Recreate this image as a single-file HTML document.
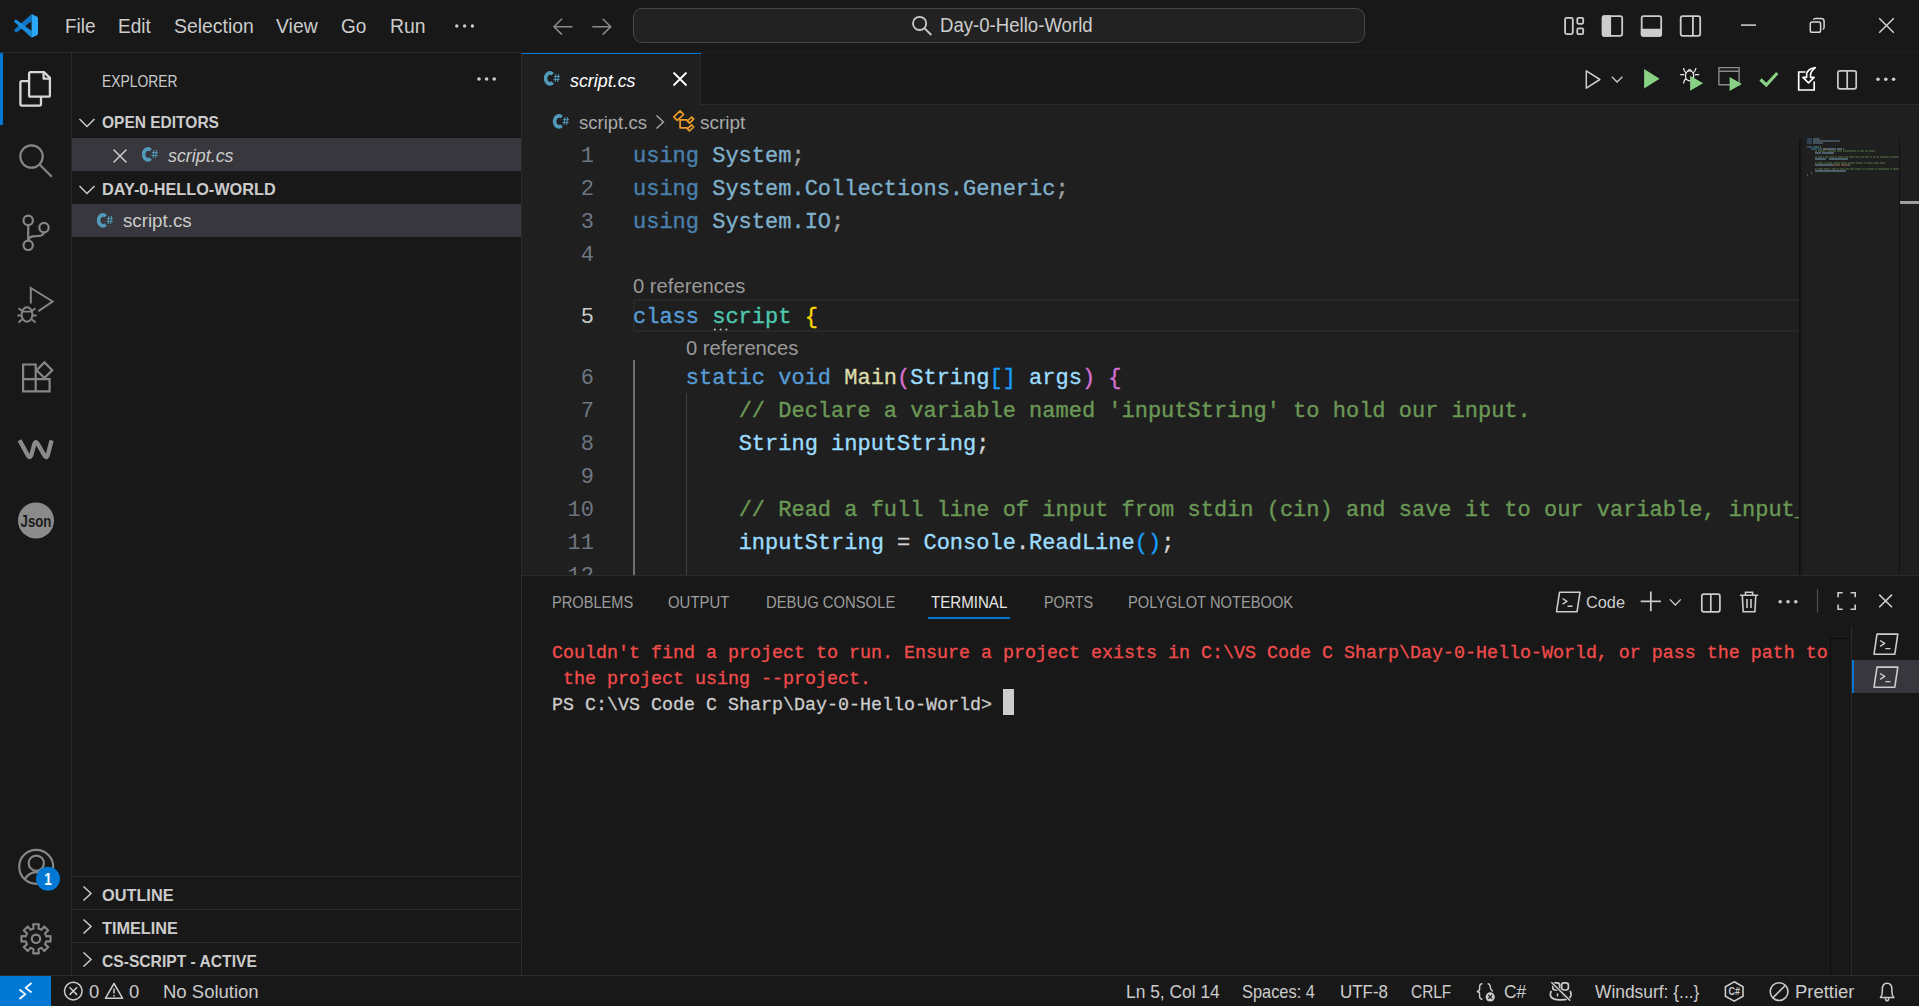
<!DOCTYPE html>
<html><head><meta charset="utf-8">
<style>
*{margin:0;padding:0;box-sizing:border-box}
html,body{width:1919px;height:1006px;overflow:hidden;background:#181818}
body{position:relative;font-family:"Liberation Sans",sans-serif;color:#cccccc}
.a{position:absolute}
.t{position:absolute;white-space:pre;line-height:1;transform-origin:0 0}
.b{font-weight:bold}
.i{font-style:italic}
.code{position:absolute;white-space:pre;-webkit-text-stroke:0.35px;font-family:"Liberation Mono",monospace;font-size:22px;line-height:33px;height:33px;left:633px}
.ln{position:absolute;white-space:pre;font-family:"Liberation Mono",monospace;font-size:22px;line-height:33px;color:#6e7681;text-align:right;width:80px;left:514px}
.kw{color:#569cd6}.ns{color:#9cdcfe}.ty{color:#4ec9b0}.fn{color:#dcdcaa}.cm{color:#6a9955}.pu{color:#d4d4d4}
.ukw{color:#4a80ad}.uns{color:#7fb0cc}.upu{color:#a0a0a0}
.term{position:absolute;white-space:pre;-webkit-text-stroke:0.3px;font-family:"Liberation Mono",monospace;font-size:18.33px;line-height:26px;left:552px}
#ov{position:absolute;left:0;top:0;width:1919px;height:1006px;overflow:visible}
</style></head><body>
<!-- regions -->
<div class="a" style="left:0;top:0;width:1919px;height:53px;background:#181818;border-bottom:1px solid #2b2b2b"></div>
<div class="a" style="left:0;top:53px;width:72px;height:922px;background:#181818;border-right:1px solid #2b2b2b"></div>
<div class="a" style="left:72px;top:53px;width:450px;height:922px;background:#181818;border-right:1px solid #2b2b2b"></div>
<div class="a" style="left:522px;top:52px;width:1397px;height:523px;background:#1f1f1f"></div>
<div class="a" style="left:522px;top:53px;width:1397px;height:52px;background:#181818;border-bottom:1px solid #2b2b2b"></div>
<div class="a" style="left:522px;top:575px;width:1397px;height:400px;background:#181818;border-top:1px solid #2b2b2b"></div>
<div class="a" style="left:0;top:975px;width:1919px;height:31px;background:#181818;border-top:1px solid #2b2b2b"></div>
<!-- activity indicator -->
<div class="a" style="left:0;top:53px;width:3px;height:72px;background:#0078d4"></div>

<!-- TITLE BAR -->
<div class="t" style="left:65px;top:16px;font-size:20px;transform:scaleX(0.95)">File</div>
<div class="t" style="left:118px;top:16px;font-size:20px;transform:scaleX(0.95)">Edit</div>
<div class="t" style="left:174px;top:16px;font-size:20px;transform:scaleX(0.97)">Selection</div>
<div class="t" style="left:276px;top:16px;font-size:20px;transform:scaleX(0.97)">View</div>
<div class="t" style="left:341px;top:16px;font-size:20px;transform:scaleX(0.95)">Go</div>
<div class="t" style="left:390px;top:16px;font-size:20px;transform:scaleX(0.97)">Run</div>
<div class="a" style="left:633px;top:8px;width:732px;height:35px;border-radius:9px;background:#222222;border:1px solid #474747"></div>
<div class="t" style="left:940px;top:15px;font-size:20px;transform:scaleX(0.93)">Day-0-Hello-World</div>

<!-- SIDEBAR -->
<div class="t" style="left:102px;top:72.5px;font-size:16.5px;transform:scaleX(0.84)">EXPLORER</div>
<div class="a" style="left:72px;top:138px;width:449px;height:33px;background:#37373d"></div>
<div class="a" style="left:72px;top:204px;width:449px;height:33px;background:#37373d"></div>
<div class="t b" style="left:102px;top:114px;font-size:16.5px;transform:scaleX(0.94)">OPEN EDITORS</div>
<div class="t i" style="left:168px;top:146px;font-size:19px;transform:scaleX(0.94)">script.cs</div>
<div class="t b" style="left:102px;top:181px;font-size:16.5px;transform:scaleX(0.985)">DAY-0-HELLO-WORLD</div>
<div class="t" style="left:123px;top:210.5px;font-size:19px;transform:scaleX(0.985)">script.cs</div>
<div class="a" style="left:72px;top:876px;width:449px;height:1px;background:#2b2b2b"></div>
<div class="a" style="left:72px;top:909px;width:449px;height:1px;background:#2b2b2b"></div>
<div class="a" style="left:72px;top:942px;width:449px;height:1px;background:#2b2b2b"></div>
<div class="t b" style="left:102px;top:886.5px;font-size:16.5px;transform:scaleX(0.988)">OUTLINE</div>
<div class="t b" style="left:102px;top:919.5px;font-size:16.5px;transform:scaleX(0.986)">TIMELINE</div>
<div class="t b" style="left:102px;top:952.5px;font-size:16.5px;transform:scaleX(0.947)">CS-SCRIPT - ACTIVE</div>

<!-- TAB -->
<div class="a" style="left:522px;top:53px;width:179px;height:52px;background:#1f1f1f;border-right:1px solid #2b2b2b"></div>
<div class="a" style="left:522px;top:52.5px;width:179px;height:1.5px;background:#0078d4"></div>
<div class="t i" style="left:570px;top:71px;font-size:19px;color:#ffffff;transform:scaleX(0.94)">script.cs</div>
<div class="t" style="left:579px;top:113px;font-size:19px;color:#a9a9a9;transform:scaleX(0.975)">script.cs</div>
<div class="t" style="left:700px;top:113px;font-size:19px;color:#a9a9a9">script</div>

<!-- CODE -->
<div class="ln" style="top:140px">1</div>
<div class="ln" style="top:173px">2</div>
<div class="ln" style="top:206px">3</div>
<div class="ln" style="top:239px">4</div>
<div class="ln" style="top:301px;color:#cccccc">5</div>
<div class="ln" style="top:362px">6</div>
<div class="ln" style="top:395px">7</div>
<div class="ln" style="top:428px">8</div>
<div class="ln" style="top:461px">9</div>
<div class="ln" style="top:494px">10</div>
<div class="ln" style="top:527px">11</div>
<div class="ln" style="top:560px;height:15px;overflow:hidden">12</div>
<!-- current line box -->
<div class="a" style="left:633px;top:299px;width:1166px;height:33px;border:2px solid #282828;border-right:none"></div>
<!-- indent guides -->
<div class="a" style="left:633px;top:360px;width:2px;height:215px;background:#707070"></div>
<div class="a" style="left:686px;top:393px;width:1px;height:182px;background:#404040"></div>

<div class="code" style="top:140px"><span class="ukw">using</span> <span class="uns">System</span><span class="upu">;</span></div>
<div class="code" style="top:173px"><span class="ukw">using</span> <span class="uns">System.Collections.Generic</span><span class="upu">;</span></div>
<div class="code" style="top:206px"><span class="ukw">using</span> <span class="uns">System.IO</span><span class="upu">;</span></div>
<div class="t" style="left:633px;top:276px;font-size:20px;color:#999999;transform:scaleX(1.01)">0 references</div>
<div class="code" style="top:301px"><span class="kw">class</span> <span class="ty">script</span> <span style="color:#ffd700">{</span></div>
<div class="t" style="left:686px;top:338px;font-size:20px;color:#999999;transform:scaleX(1.01)">0 references</div>
<div class="code" style="top:362px">    <span class="kw">static</span> <span class="kw">void</span> <span class="fn">Main</span><span style="color:#da70d6">(</span><span class="ns">String</span><span style="color:#179fff">[]</span> <span class="ns">args</span><span style="color:#da70d6">)</span> <span style="color:#da70d6">{</span></div>
<div class="code" style="top:395px">        <span class="cm">// Declare a variable named 'inputString' to hold our input.</span></div>
<div class="code" style="top:428px">        <span class="ns">String</span> <span class="ns">inputString</span><span class="pu">;</span></div>
<div class="code" style="top:494px;width:1166px;overflow:hidden">        <span class="cm">// Read a full line of input from stdin (cin) and save it to our variable, input_</span></div>
<div class="code" style="top:527px">        <span class="ns">inputString</span> <span class="pu">=</span> <span class="ns">Console</span><span class="pu">.</span><span class="ns">ReadLine</span><span style="color:#179fff">()</span><span class="pu">;</span></div>

<!-- PANEL -->
<div class="t" style="left:552px;top:594px;font-size:16.5px;color:#9d9d9d;transform:scaleX(0.885)">PROBLEMS</div>
<div class="t" style="left:668px;top:594px;font-size:16.5px;color:#9d9d9d;transform:scaleX(0.905)">OUTPUT</div>
<div class="t" style="left:766px;top:594px;font-size:16.5px;color:#9d9d9d;transform:scaleX(0.898)">DEBUG CONSOLE</div>
<div class="t" style="left:931px;top:594px;font-size:16.5px;color:#e7e7e7;transform:scaleX(0.915)">TERMINAL</div>
<div class="a" style="left:928px;top:617px;width:82px;height:1.5px;background:#0078d4"></div>
<div class="t" style="left:1044px;top:594px;font-size:16.5px;color:#9d9d9d;transform:scaleX(0.87)">PORTS</div>
<div class="t" style="left:1128px;top:594px;font-size:16.5px;color:#9d9d9d;transform:scaleX(0.89)">POLYGLOT NOTEBOOK</div>
<div class="t" style="left:1586px;top:594px;font-size:17px;color:#cccccc;transform:scaleX(0.96)">Code</div>
<div class="term" style="top:641px;color:#f14c4c">Couldn't find a project to run. Ensure a project exists in C:\VS Code C Sharp\Day-0-Hello-World, or pass the path to</div>
<div class="term" style="top:667px;color:#f14c4c"> the project using --project.</div>
<div class="term" style="top:693px;color:#cccccc">PS C:\VS Code C Sharp\Day-0-Hello-World> </div>
<div class="a" style="left:1003px;top:689px;width:11px;height:26px;background:#cccccc"></div>
<!-- terminal side -->
<div class="a" style="left:1830px;top:638px;width:21px;height:337px;border-left:1px solid #0c0c0c;border-top:1px solid #0c0c0c"></div>
<div class="a" style="left:1851px;top:627px;width:1px;height:348px;background:#2b2b2b"></div>
<div class="a" style="left:1852px;top:660px;width:67px;height:33px;background:#37373d"></div>
<div class="a" style="left:1852px;top:660px;width:2px;height:33px;background:#0078d4"></div>

<!-- STATUS -->
<div class="a" style="left:0;top:976px;width:51px;height:30px;background:#0078d4"></div>
<div class="t" style="left:89px;top:983px;font-size:18.5px">0</div>
<div class="t" style="left:129px;top:983px;font-size:18.5px">0</div>
<div class="t" style="left:163px;top:983px;font-size:18.5px;transform:scaleX(1.0)">No Solution</div>
<div class="t" style="left:1126px;top:983px;font-size:18.5px;transform:scaleX(0.94)">Ln 5, Col 14</div>
<div class="t" style="left:1242px;top:983px;font-size:18.5px;transform:scaleX(0.886)">Spaces: 4</div>
<div class="t" style="left:1340px;top:983px;font-size:18.5px;transform:scaleX(0.916)">UTF-8</div>
<div class="t" style="left:1411px;top:983px;font-size:18.5px;transform:scaleX(0.833)">CRLF</div>
<div class="t" style="left:1504px;top:983px;font-size:18.5px;transform:scaleX(0.94)">C#</div>
<div class="t" style="left:1595px;top:983px;font-size:18.5px;transform:scaleX(0.94)">Windsurf: {...}</div>
<div class="t" style="left:1795px;top:983px;font-size:18.5px;transform:scaleX(0.997)">Prettier</div>

<!--ICONS-->
<svg id="ov" width="1919" height="1006" viewBox="0 0 1919 1006" fill="none" stroke-linecap="butt" stroke-linejoin="miter">
<!-- VS Code logo -->
<path d="M31.6 14 L14.2 29.7 Q13.9 30.5 14.5 31.1 L15.9 32.2 Q16.6 32.7 17.3 32.1 L31.6 21.2 Z" fill="#0d74c4"/>
<path d="M16.5 19.8 Q15.7 19.3 15 19.9 L14.3 20.6 Q13.8 21.3 14.4 21.9 L31.6 37.8 L31.6 31 Z" fill="#1a8ee0"/>
<path d="M31.6 14 L36.8 16.5 Q38 17.1 38 18.4 V33.3 Q38 34.6 36.8 35.2 L31.6 37.8 Z" fill="#2aa8f5"/>
<!-- nav arrows -->
<g stroke="#8b8b8b" stroke-width="1.5">
<path d="M554 26.8 H572.4 M562 18.8 L554 26.8 L562 34.6"/>
<path d="M592.3 26.8 H610.7 M602.7 18.8 L610.7 26.8 L602.7 34.6"/>
</g>
<!-- menu dots -->
<g fill="#cccccc"><circle cx="456.8" cy="26" r="1.7"/><circle cx="464.6" cy="26" r="1.7"/><circle cx="472.4" cy="26" r="1.7"/></g>
<!-- command center search -->
<g stroke="#cccccc" stroke-width="1.8"><circle cx="919.6" cy="23.4" r="6.6"/><path d="M924.4 28.2 L931.3 35"/></g>
<!-- layout icons -->
<g stroke="#cccccc" stroke-width="1.8">
<rect x="1565.1" y="17.9" width="7.7" height="16.2" rx="1.5"/>
<rect x="1577.3" y="17.9" width="5.9" height="5.9" rx="1.2"/>
<rect x="1577.3" y="28.3" width="5.9" height="5.8" rx="1.2"/>
<rect x="1602.7" y="16.1" width="19.5" height="19.7" rx="2"/>
<rect x="1641.7" y="16.1" width="19.5" height="19.7" rx="2"/>
<rect x="1680.7" y="16.1" width="19.5" height="19.7" rx="2"/>
<path d="M1692.9 16.1 V35.8"/>
</g>
<path d="M1604 15.2 H1611.1 V36.7 H1604 Q1601.8 36.7 1601.8 34.5 V17.4 Q1601.8 15.2 1604 15.2 Z" fill="#cccccc"/>
<path d="M1640.8 28.7 H1662 V34.5 Q1662 36.7 1659.8 36.7 H1643 Q1640.8 36.7 1640.8 34.5 Z" fill="#cccccc"/>
<!-- window controls -->
<g stroke="#d6d6d6" stroke-width="1.5">
<path d="M1741 25.1 H1756"/>
<rect x="1810.3" y="22" width="10.3" height="10.3" rx="1.8"/>
<path d="M1813.4 19.8 Q1813.9 18.5 1815.6 18.5 H1821.2 Q1824.1 18.5 1824.1 21.4 V27.2 Q1824.1 28.9 1822.7 29.3"/>
<path d="M1879.2 18.2 L1893.8 32.8 M1893.8 18.2 L1879.2 32.8" stroke-width="1.4"/>
</g>
<!-- activity bar -->
<g stroke="#d7d7d7" stroke-width="2.3" stroke-linejoin="round">
<path d="M29.1 73.7 Q29.1 72.2 30.6 72.2 H44.2 L49.9 77.9 V95.2 Q49.9 96.7 48.4 96.7 H30.6 Q29.1 96.7 29.1 95.2 Z"/>
<path d="M43.6 72.2 V78.7 H49.9"/>
<path d="M29.1 81.2 H21.9 Q20.4 81.2 20.4 82.7 V104.1 Q20.4 105.6 21.9 105.6 H39.5 Q41 105.6 41 104.1 V96.7"/>
</g>
<g stroke="#868686" stroke-width="2.2">
<circle cx="31.5" cy="156.5" r="11.2"/>
<path d="M39.5 164.5 L51.8 176.8"/>
<circle cx="28.2" cy="220.4" r="4.7"/>
<circle cx="44" cy="227.6" r="4.7"/>
<circle cx="28.2" cy="245.3" r="4.7"/>
<path d="M28.2 225.1 V240.6"/>
<path d="M44 232.3 Q43.5 235.6 38 236 L33 236.4 Q29 237 28.2 240.2"/>
<path d="M30.8 303.4 V288 L52.6 301.5 L38.4 311.2" stroke-width="2"/>
<ellipse cx="27" cy="314.5" rx="5.4" ry="7.2" stroke-width="1.9"/>
<path d="M21.6 311.6 H32.4 M18.5 308.3 L22 311 M35.5 308.3 L32 311 M17.5 315.5 H21.6 M32.4 315.5 H36.5 M18.5 322.5 L22 319.5 M35.5 322.5 L32 319.5" stroke-width="1.9"/>
<path d="M23.1 364.5 H35.7 V391.3 H23.1 Z M23.1 379.1 H49.6 V391.3 H35.7" stroke-width="2.2"/>
<path d="M44.4 362.4 L52.2 370.2 L44.4 378 L36.6 370.2 Z" stroke-width="2.2"/>
<circle cx="36.2" cy="866.8" r="17"/>
<circle cx="36.3" cy="863.2" r="7.6"/>
<path d="M24.5 879.5 Q29 872.5 36.3 872.2 Q40 872.2 42 873"/>
</g>
<path d="M19.6 440.2 L28 455.8 Q29.6 458.6 31.2 455.6 L34.2 444.5 Q35.6 440.2 37.6 443.6 L44.6 455.8 Q46.2 458.6 47.6 455.6 L51.6 440.4" stroke="#8b8b8b" stroke-width="4.3" stroke-linejoin="round"/>
<circle cx="36" cy="520.5" r="18" fill="#8b8b8b"/>
<text x="36" y="527" font-family="Liberation Sans" font-weight="bold" font-size="17" fill="#1b1b1b" text-anchor="middle" transform="translate(36 0) scale(0.78 1) translate(-36 0)">Json</text>
<circle cx="48" cy="878.8" r="12" fill="#0078d4"/>
<text x="48" y="885.5" font-family="Liberation Sans" font-weight="bold" font-size="16" fill="#ffffff" text-anchor="middle" transform="translate(48 0) scale(0.85 1) translate(-48 0)">1</text>
<path d="M33.18 924.27 L38.82 924.27 L38.47 928.49 L41.54 929.76 L44.28 926.53 L48.27 930.52 L45.04 933.26 L46.31 936.33 L50.53 935.98 L50.53 941.62 L46.31 941.27 L45.04 944.34 L48.27 947.08 L44.28 951.07 L41.54 947.84 L38.47 949.11 L38.82 953.33 L33.18 953.33 L33.53 949.11 L30.46 947.84 L27.72 951.07 L23.73 947.08 L26.96 944.34 L25.69 941.27 L21.47 941.62 L21.47 935.98 L25.69 936.33 L26.96 933.26 L23.73 930.52 L27.72 926.53 L30.46 929.76 L33.53 928.49 Z" stroke="#868686" stroke-width="2.1" stroke-linejoin="round"/>
<circle cx="36" cy="938.8" r="4.2" stroke="#868686" stroke-width="2.1"/>
<!-- sidebar -->
<g fill="#cccccc"><circle cx="479" cy="79" r="1.8"/><circle cx="486.6" cy="79" r="1.8"/><circle cx="494.2" cy="79" r="1.8"/></g>
<g stroke="#cccccc" stroke-width="1.5">
<path d="M79.5 119 L87 126.5 L94.5 119"/>
<path d="M79.5 186 L87 193.5 L94.5 186"/>
<path d="M83.5 886.5 L91 893.5 L83.5 900.5"/>
<path d="M83.5 919.5 L91 926.5 L83.5 933.5"/>
<path d="M83.5 952.5 L91 959.5 L83.5 966.5"/>
<path d="M113.5 149.5 L126.5 162.5 M126.5 149.5 L113.5 162.5"/>
</g>
<!-- C# icons -->
<g id="cs">
<path d="M552.6 74.2 A4.2 5.5 0 1 0 552.6 82.6" stroke="#519aba" stroke-width="3.7"/>
<path d="M555.9 74 L555.1 82 M558.5 74 L557.7 82 M553.9 76.6 H560 M553.5 79.4 H559.6" stroke="#519aba" stroke-width="1"/>
</g>
<use href="#cs" transform="translate(-402 76)"/>
<use href="#cs" transform="translate(-447 142)"/>
<use href="#cs" transform="translate(9 43)"/>
<!-- tab close -->
<path d="M673.5 72.5 L686.5 85.5 M686.5 72.5 L673.5 85.5" stroke="#ffffff" stroke-width="1.8"/>
<!-- breadcrumb -->
<path d="M656.5 115.5 L663.5 122 L656.5 128.5" stroke="#a9a9a9" stroke-width="1.4"/>
<g stroke="#ee9d28" stroke-width="1.7" stroke-linejoin="round">
<path d="M673.8 116.8 L680.1 110.9 L683.6 114.5 L677.3 120.4 Z"/>
<path d="M687.4 121 L691.6 117 L693.7 119.1 L689.5 123.1 Z"/>
<path d="M687.4 128.9 L691.6 124.9 L693.7 127 L689.5 131 Z"/>
<path d="M680.1 119 V127.8 H687.8 M680.1 119.9 H686.7 L687.9 121.1"/>
</g>
<!-- editor toolbar -->
<path d="M1586.3 70.8 L1599.8 79.5 L1586.3 88.2 Z" stroke="#cccccc" stroke-width="1.5" stroke-linejoin="round"/>
<path d="M1611.8 76.8 L1617.1 82 L1622.4 76.8" stroke="#cccccc" stroke-width="1.3"/>
<path d="M1644.1 68.9 L1659.6 78.8 L1644.1 88.6 Z" fill="#89d185"/>
<g stroke="#ececec" stroke-width="1.3">
<ellipse cx="1689.6" cy="75.8" rx="4.1" ry="5"/>
<path d="M1687.6 71.3 Q1689.6 67.8 1691.6 71.3"/>
<path d="M1680.2 74.6 H1684.3 M1695 74.6 H1699.2 M1683.5 68 Q1684 71.5 1686.3 73 M1696 68 Q1695.4 71.5 1693 73 M1683.5 83.5 Q1683.8 80.2 1686 78.6 M1696 83.5 Q1695.6 80.2 1693.3 78.6"/>
</g>
<path d="M1690.1 75.7 L1703.1 83.2 L1690.1 90.8 Z" fill="#89d185"/>
<path d="M1718.9 67.6 H1739.1 V84.8 H1718.9 Z M1718.9 71.3 H1739.1" stroke="#8b8b8b" stroke-width="1.4"/>
<path d="M1729.6 77 L1741.8 84 L1729.6 91 Z" fill="#89d185"/>
<path d="M1760.5 79.5 L1766.3 85 L1777.3 73" stroke="#89d185" stroke-width="3.2"/>
<path d="M1805.5 72 H1798.7 V90 H1814.2 V81.5" stroke="#ffffff" stroke-width="1.7"/>
<path d="M1815.4 67.6 Q1806.6 68.6 1806.6 75.2 V77.4 H1802.9 L1808.5 82.9 L1814.2 77.4 H1810.5 V75.2 Q1810.5 71.2 1815.4 67.6 Z" stroke="#ffffff" stroke-width="1.6" stroke-linejoin="round"/>
<rect x="1837.9" y="70.9" width="18.3" height="17.9" rx="2" stroke="#cccccc" stroke-width="1.7"/>
<path d="M1847.2 70.9 V88.8" stroke="#cccccc" stroke-width="1.7"/>
<g fill="#cccccc"><circle cx="1878" cy="79.2" r="1.8"/><circle cx="1885.8" cy="79.2" r="1.8"/><circle cx="1893.6" cy="79.2" r="1.8"/></g>
<!-- panel actions -->
<g id="termic" stroke="#cccccc" stroke-width="1.6" stroke-linejoin="round">
<path d="M1559.5 592.3 H1580 L1577 611.8 H1556.5 Z"/>
<path d="M1562.5 598.5 L1567 601.3 L1562.5 604.1 M1567.5 606.3 H1572.5" stroke-width="1.4"/>
</g>
<path d="M1650.8 591.5 V611.2 M1640.7 601.3 H1660.9" stroke="#cccccc" stroke-width="1.7"/>
<path d="M1669.8 599.4 L1675.3 605 L1680.8 599.4" stroke="#cccccc" stroke-width="1.3"/>
<rect x="1701.8" y="594.2" width="18.1" height="17.6" rx="2" stroke="#cccccc" stroke-width="1.7"/>
<path d="M1710.8 594.2 V611.8" stroke="#cccccc" stroke-width="1.7"/>
<g stroke="#cccccc" stroke-width="1.6">
<path d="M1739.9 595.3 H1758.2 M1745.5 595.3 V592.3 H1752.6 V595.3 M1742.3 595.3 L1743.2 611.8 H1754.9 L1755.8 595.3 M1747 599 V608 M1751 599 V608"/>
</g>
<g fill="#cccccc"><circle cx="1780.2" cy="601.7" r="1.8"/><circle cx="1788" cy="601.7" r="1.8"/><circle cx="1795.8" cy="601.7" r="1.8"/></g>
<path d="M1817.5 589 V612.6" stroke="#505050" stroke-width="1.2"/>
<path d="M1838.1 597.3 V592.7 H1842.7 M1850.6 592.7 H1855.2 V597.3 M1855.2 604.6 V609.2 H1850.6 M1842.7 609.2 H1838.1 V604.6" stroke="#cccccc" stroke-width="1.6"/>
<path d="M1879.2 594.6 L1892 607.2 M1892 594.6 L1879.2 607.2" stroke="#cccccc" stroke-width="1.6"/>
<g stroke="#cccccc" stroke-width="1.6" stroke-linejoin="round">
<path d="M1877 634.1 H1897.8 L1894.8 654.2 H1874 Z"/>
<path d="M1880 640.5 L1884.7 643.4 L1880 646.3 M1885.3 648.6 H1890.5" stroke-width="1.4"/>
<path d="M1877 667.1 H1897.8 L1894.8 687.2 H1874 Z"/>
<path d="M1880 673.5 L1884.7 676.4 L1880 679.3 M1885.3 681.6 H1890.5" stroke-width="1.4"/>
</g>
<!-- status bar -->
<path d="M19.5 989.5 L25.3 994.2 L19.5 999 M31.5 983 L25.7 987.8 L31.5 992.5" stroke="#ffffff" stroke-width="1.7"/>
<g stroke="#cccccc" stroke-width="1.5">
<circle cx="73.3" cy="991.1" r="8.8"/>
<path d="M69.5 987.3 L77.1 994.9 M77.1 987.3 L69.5 994.9"/>
<path d="M114 983.5 L122.6 998.3 H105.4 Z" stroke-linejoin="round"/>
<path d="M114 988.5 V993.5 M114 995 V996.6"/>
</g>
<g stroke="#cccccc" stroke-width="1.5">
<path d="M1482.5 983.6 Q1479.6 983.8 1479.6 986.8 V989.2 Q1479.6 991.3 1476.8 991.5 Q1479.6 991.7 1479.6 993.8 V996.3 Q1479.6 999.3 1482.5 999.5" stroke-width="1.4"/>
<path d="M1487.6 983.6 Q1490 983.8 1490.2 986.8 Q1490.4 990 1492.8 991.4" stroke-width="1.4"/>
<circle cx="1490.2" cy="996.9" r="4.6" fill="#cccccc" stroke="none"/>
<path d="M1488.3 995 L1492.1 998.8 M1492.1 995 L1488.3 998.8" stroke="#181818" stroke-width="1.1"/>
<path d="M1734.2 981.8 L1743 986.7 V996.3 L1734.2 1001.2 L1725.4 996.3 V986.7 Z" stroke-width="1.6"/>
<circle cx="1779.1" cy="991.6" r="8.9" stroke-width="1.6"/>
<path d="M1773 997.7 L1785.2 985.5" stroke-width="1.6"/>
<path d="M1880.4 997.6 Q1882.3 995.6 1882.3 991.8 V989.6 Q1882.3 983.2 1887.1 983.2 Q1891.9 983.2 1891.9 989.6 V991.8 Q1891.9 995.6 1893.8 997.6 Z M1885.4 998.4 Q1885.6 1000.8 1887.1 1000.8 Q1888.6 1000.8 1888.8 998.4" stroke-width="1.5" stroke-linejoin="round"/>

<rect x="1552.8" y="982.8" width="6.8" height="7.2" rx="2.4" stroke-width="1.7"/>
<rect x="1561.6" y="982.8" width="6.8" height="7.2" rx="2.4" stroke-width="1.7"/>
<path d="M1551.2 990.8 Q1550.2 993 1550.4 995.5 Q1551.2 999.8 1560.7 999.8 Q1570.2 999.8 1571 995.5 Q1571.2 993 1570.2 990.8" stroke-width="1.7"/>
<path d="M1557.5 993.2 V996.4 M1563.5 993.2 V996.4" stroke-width="1.5"/>
<path d="M1551.3 982.3 L1570.2 1000.6" stroke="#181818" stroke-width="3"/>
<path d="M1551.3 982.3 L1570.2 1000.6" stroke-width="1.5"/>
</g>
<path d="M1727 986.5" />
<text x="1734.2" y="995" font-family="Liberation Sans" font-weight="bold" font-size="10" fill="#cccccc" text-anchor="middle" transform="translate(1734.2 0) scale(0.9 1) translate(-1734.2 0)">C#</text>
<g opacity="0.5">
<rect x="1807" y="138.3" width="5" height="1.4" fill="#4a80ad"/>
<rect x="1813" y="138.3" width="6" height="1.4" fill="#7fb0cc"/>
<rect x="1819" y="138.3" width="1" height="1.4" fill="#888"/>
<rect x="1807" y="140.3" width="5" height="1.4" fill="#4a80ad"/>
<rect x="1813" y="140.3" width="26" height="1.4" fill="#7fb0cc"/>
<rect x="1839" y="140.3" width="1" height="1.4" fill="#888"/>
<rect x="1807" y="142.3" width="5" height="1.4" fill="#4a80ad"/>
<rect x="1813" y="142.3" width="9" height="1.4" fill="#7fb0cc"/>
<rect x="1822" y="142.3" width="1" height="1.4" fill="#888"/>
<rect x="1807" y="146.3" width="5" height="1.4" fill="#569cd6"/>
<rect x="1813" y="146.3" width="6" height="1.4" fill="#4ec9b0"/>
<rect x="1820" y="146.3" width="1" height="1.4" fill="#bbb"/>
<rect x="1811" y="148.3" width="6" height="1.4" fill="#569cd6"/>
<rect x="1818" y="148.3" width="4" height="1.4" fill="#569cd6"/>
<rect x="1823" y="148.3" width="4" height="1.4" fill="#dcdcaa"/>
<rect x="1827" y="148.3" width="9" height="1.4" fill="#9cdcfe"/>
<rect x="1837" y="148.3" width="5" height="1.4" fill="#9cdcfe"/>
<rect x="1843" y="148.3" width="1" height="1.4" fill="#bbb"/>
<rect x="1815" y="150.3" width="2" height="1.4" fill="#6a9955"/>
<rect x="1818" y="150.3" width="7" height="1.4" fill="#6a9955"/>
<rect x="1826" y="150.3" width="1" height="1.4" fill="#6a9955"/>
<rect x="1828" y="150.3" width="8" height="1.4" fill="#6a9955"/>
<rect x="1837" y="150.3" width="5" height="1.4" fill="#6a9955"/>
<rect x="1843" y="150.3" width="13" height="1.4" fill="#6a9955"/>
<rect x="1857" y="150.3" width="2" height="1.4" fill="#6a9955"/>
<rect x="1860" y="150.3" width="4" height="1.4" fill="#6a9955"/>
<rect x="1865" y="150.3" width="3" height="1.4" fill="#6a9955"/>
<rect x="1869" y="150.3" width="6" height="1.4" fill="#6a9955"/>
<rect x="1815" y="152.3" width="6" height="1.4" fill="#9cdcfe"/>
<rect x="1822" y="152.3" width="12" height="1.4" fill="#9cdcfe"/>
<rect x="1815" y="156.3" width="2" height="1.4" fill="#6a9955"/>
<rect x="1818" y="156.3" width="4" height="1.4" fill="#6a9955"/>
<rect x="1823" y="156.3" width="1" height="1.4" fill="#6a9955"/>
<rect x="1825" y="156.3" width="4" height="1.4" fill="#6a9955"/>
<rect x="1830" y="156.3" width="4" height="1.4" fill="#6a9955"/>
<rect x="1835" y="156.3" width="2" height="1.4" fill="#6a9955"/>
<rect x="1838" y="156.3" width="5" height="1.4" fill="#6a9955"/>
<rect x="1844" y="156.3" width="4" height="1.4" fill="#6a9955"/>
<rect x="1849" y="156.3" width="5" height="1.4" fill="#6a9955"/>
<rect x="1855" y="156.3" width="5" height="1.4" fill="#6a9955"/>
<rect x="1861" y="156.3" width="3" height="1.4" fill="#6a9955"/>
<rect x="1865" y="156.3" width="4" height="1.4" fill="#6a9955"/>
<rect x="1870" y="156.3" width="2" height="1.4" fill="#6a9955"/>
<rect x="1873" y="156.3" width="2" height="1.4" fill="#6a9955"/>
<rect x="1876" y="156.3" width="3" height="1.4" fill="#6a9955"/>
<rect x="1880" y="156.3" width="9" height="1.4" fill="#6a9955"/>
<rect x="1890" y="156.3" width="9" height="1.4" fill="#6a9955"/>
<rect x="1815" y="158.3" width="11" height="1.4" fill="#9cdcfe"/>
<rect x="1829" y="158.3" width="19" height="1.4" fill="#9cdcfe"/>
<rect x="1815" y="162.3" width="2" height="1.4" fill="#6a9955"/>
<rect x="1818" y="162.3" width="5" height="1.4" fill="#6a9955"/>
<rect x="1824" y="162.3" width="1" height="1.4" fill="#6a9955"/>
<rect x="1826" y="162.3" width="6" height="1.4" fill="#6a9955"/>
<rect x="1833" y="162.3" width="7" height="1.4" fill="#6a9955"/>
<rect x="1841" y="162.3" width="6" height="1.4" fill="#6a9955"/>
<rect x="1848" y="162.3" width="7" height="1.4" fill="#6a9955"/>
<rect x="1856" y="162.3" width="7" height="1.4" fill="#6a9955"/>
<rect x="1864" y="162.3" width="2" height="1.4" fill="#6a9955"/>
<rect x="1867" y="162.3" width="6" height="1.4" fill="#6a9955"/>
<rect x="1874" y="162.3" width="5" height="1.4" fill="#6a9955"/>
<rect x="1880" y="162.3" width="5" height="1.4" fill="#6a9955"/>
<rect x="1815" y="164.3" width="18" height="1.4" fill="#9cdcfe"/>
<rect x="1833" y="164.3" width="7" height="1.4" fill="#ce9178"/>
<rect x="1841" y="164.3" width="7" height="1.4" fill="#ce9178"/>
<rect x="1848" y="164.3" width="2" height="1.4" fill="#bbb"/>
<rect x="1815" y="168.3" width="2" height="1.4" fill="#6a9955"/>
<rect x="1818" y="168.3" width="5" height="1.4" fill="#6a9955"/>
<rect x="1824" y="168.3" width="5" height="1.4" fill="#6a9955"/>
<rect x="1830" y="168.3" width="1" height="1.4" fill="#6a9955"/>
<rect x="1832" y="168.3" width="4" height="1.4" fill="#6a9955"/>
<rect x="1837" y="168.3" width="2" height="1.4" fill="#6a9955"/>
<rect x="1840" y="168.3" width="4" height="1.4" fill="#6a9955"/>
<rect x="1845" y="168.3" width="4" height="1.4" fill="#6a9955"/>
<rect x="1850" y="168.3" width="4" height="1.4" fill="#6a9955"/>
<rect x="1855" y="168.3" width="6" height="1.4" fill="#6a9955"/>
<rect x="1862" y="168.3" width="3" height="1.4" fill="#6a9955"/>
<rect x="1866" y="168.3" width="8" height="1.4" fill="#6a9955"/>
<rect x="1875" y="168.3" width="2" height="1.4" fill="#6a9955"/>
<rect x="1878" y="168.3" width="11" height="1.4" fill="#6a9955"/>
<rect x="1890" y="168.3" width="2" height="1.4" fill="#6a9955"/>
<rect x="1893" y="168.3" width="6" height="1.4" fill="#6a9955"/>
<rect x="1815" y="170.3" width="31" height="1.4" fill="#9cdcfe"/>
<rect x="1811" y="172.3" width="1" height="1.4" fill="#bbb"/>
<rect x="1807" y="174.3" width="1" height="1.4" fill="#bbb"/>
</g>
<rect x="1799" y="138" width="1" height="437" fill="#101010"/><rect x="1800" y="138" width="1" height="437" fill="#151515"/><rect x="1801" y="138" width="1" height="437" fill="#1a1a1a"/><rect x="1802" y="138" width="1" height="437" fill="#1d1d1d"/>
<path d="M1899.5 138 V575" stroke="#121212" stroke-width="1"/>
<rect x="1900" y="201" width="19" height="3" fill="#a0a0a0"/>
<g fill="#c8c8c8"><circle cx="714.8" cy="329.6" r="1"/><circle cx="720.6" cy="329.6" r="1"/><circle cx="726.4" cy="329.6" r="1"/></g>
</svg>
<!--/ICONS-->
</body></html>
